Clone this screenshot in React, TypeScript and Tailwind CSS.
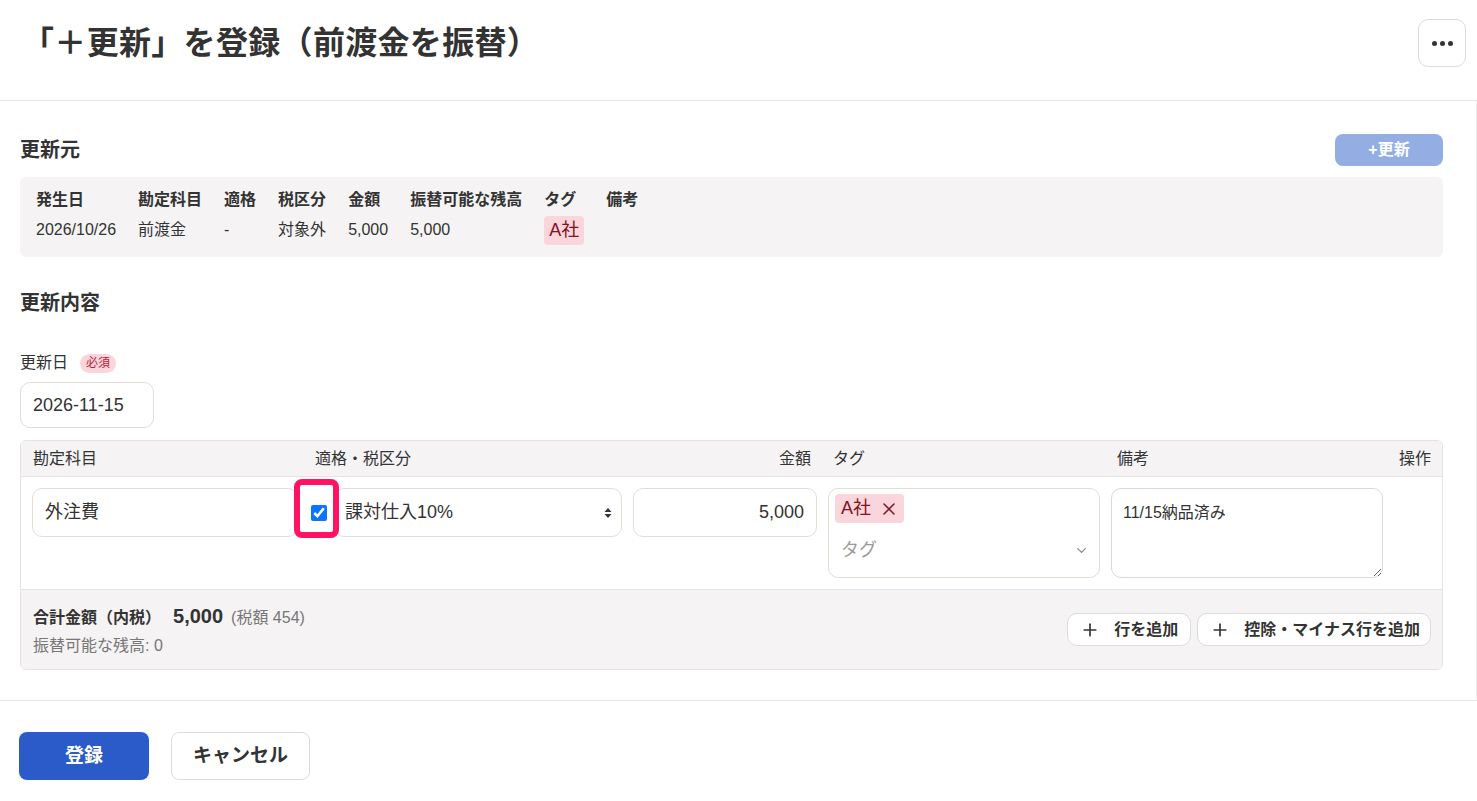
import React from "react";
import { ChevronDown, Plus, X } from "lucide-react";

const FONT = { fontFamily: '"Liberation Sans", "Noto Sans CJK JP", sans-serif' };

function SelectArrows() {
  return (
    <svg width="8" height="12" viewBox="0 0 8 12" className="shrink-0">
      <path d="M4 1 L7.5 5 L0.5 5 Z" fill="#333" />
      <path d="M4 11 L7.5 7 L0.5 7 Z" fill="#333" />
    </svg>
  );
}

export default function App() {
  return (
    <div className="min-h-screen bg-white text-[#333]" style={FONT}>
      {/* Header */}
      <header className="h-[101px] border-b border-[#e6e6e6] pl-5 pr-[11px] flex items-start justify-between pt-[19px]">
        <h1 className="text-[32px] font-bold leading-[48px] tracking-[0.01em] ml-[2px]">「＋更新」を登録（前渡金を振替）</h1>
        <button className="w-[48px] h-[48px] rounded-[10px] border border-[#dcdcdc] bg-white flex items-center justify-center gap-[3px]">
          <span className="w-[5px] h-[5px] rounded-full bg-[#333]" />
          <span className="w-[5px] h-[5px] rounded-full bg-[#333]" />
          <span className="w-[5px] h-[5px] rounded-full bg-[#333]" />
        </button>
      </header>

      <main className="pl-5 pr-[33px] pt-[33px] pb-[30px] border-r border-[#eeeeee]">
        {/* 更新元 */}
        <div className="flex items-center justify-between h-[32px]">
          <h2 className="text-[20px] font-bold leading-[28px]">更新元</h2>
          <button className="w-[108px] h-[32px] rounded-[8px] bg-[#94aee4] text-white text-[16px] font-bold">+更新</button>
        </div>
        <div className="mt-[11px] h-[80px] rounded-[6px] bg-[#f5f3f4] px-4 pt-3">
          <table className="border-collapse text-[16px]">
            <thead>
              <tr className="text-left">
                <th className="pr-[22px] font-bold leading-[22px] p-0">発生日</th>
                <th className="pr-[22px] font-bold leading-[22px]">勘定科目</th>
                <th className="pr-[22px] font-bold leading-[22px]">適格</th>
                <th className="pr-[22px] font-bold leading-[22px]">税区分</th>
                <th className="pr-[22px] font-bold leading-[22px]">金額</th>
                <th className="pr-[22px] font-bold leading-[22px]">振替可能な残高</th>
                <th className="pr-[22px] font-bold leading-[22px]">タグ</th>
                <th className="font-bold leading-[22px]">備考</th>
              </tr>
            </thead>
            <tbody>
              <tr className="align-top">
                <td className="pr-[22px] pt-[5px] leading-[27px]">2026/10/26</td>
                <td className="pr-[22px] pt-[5px] leading-[27px]">前渡金</td>
                <td className="pr-[22px] pt-[5px] leading-[27px]">-</td>
                <td className="pr-[22px] pt-[5px] leading-[27px]">対象外</td>
                <td className="pr-[22px] pt-[5px] leading-[27px]">5,000</td>
                <td className="pr-[22px] pt-[5px] leading-[27px]">5,000</td>
                <td className="pr-[22px] pt-[5px]">
                  <span className="flex w-fit h-[29px] items-center px-[5px] rounded-[4px] bg-[#fbd5dc] text-[#7d1426] text-[18px]">A社</span>
                </td>
                <td></td>
              </tr>
            </tbody>
          </table>
        </div>

        {/* 更新内容 */}
        <h2 className="mt-[32px] text-[20px] font-bold leading-[28px]">更新内容</h2>
        <div className="mt-[34px] flex items-center gap-[12px] h-[24px]">
          <span className="text-[16px] leading-[24px]">更新日</span>
          <span className="h-[19px] px-[6px] rounded-full bg-[#fbd5dc] text-[#b51f3a] text-[12px] leading-[19px]">必須</span>
        </div>
        <div className="mt-[7px] w-[134px] h-[46px] rounded-[10px] border border-[#e2ded6] flex items-center pl-[12px] text-[18px]">
          2026-11-15
        </div>

        {/* Lines table */}
        <div className="mt-[12px] rounded-[6px] border border-[#e3e3e3] overflow-hidden">
          <div className="bg-[#f5f3f4] h-[36px] border-b border-[#e3e3e3] px-[11px] grid grid-cols-[266px_313px_184px_272px_272px_1fr] gap-x-[11px] items-center text-[16px]">
            <div className="pl-[1px]">勘定科目</div>
            <div className="pl-[6px]">適格・税区分</div>
            <div className="pr-[6px] text-right">金額</div>
            <div className="pl-[5px]">タグ</div>
            <div className="pl-[6px]">備考</div>
            <div className="text-right">操作</div>
          </div>
          <div className="bg-white px-[11px] pt-[11px] pb-[11px] grid grid-cols-[266px_313px_184px_272px_272px_1fr] gap-x-[11px] items-start">
            <div className="h-[49px] rounded-[10px] border border-[#e2ded6] flex items-center pl-[12px] text-[18px]">外注費</div>
            <div className="relative h-[49px] flex items-center">
              <input type="checkbox" checked readOnly className="ml-[2px] w-[16px] h-[16px] accent-[#0a75ff] shrink-0" />
              <div className="ml-[7px] flex-1 h-[49px] rounded-[10px] border border-[#e2ded6] flex items-center justify-between pl-[10px] pr-[9px] text-[18px]">
                <span>課対仕入10%</span>
                <SelectArrows />
              </div>
              <div className="absolute left-[-15px] top-[-9px] w-[45px] h-[59px] rounded-[8px] border-[6px] border-[#ff1464] pointer-events-none" />
            </div>
            <div className="h-[49px] rounded-[10px] border border-[#e2ded6] flex items-center justify-end pr-[12px] text-[18px]">5,000</div>
            <div className="h-[90px] rounded-[10px] border border-[#e2ded6] pl-[6px] pt-[5px] pr-[10px] flex flex-col">
              <span className="self-start h-[29px] pl-[6px] pr-[5px] rounded-[4px] bg-[#fbd5dc] text-[#7d1426] text-[18px] flex items-center gap-[8px]">
                A社
                <X size={20} strokeWidth={1.8} />
              </span>
              <div className="mt-[14px] flex items-center justify-between pl-[6px]">
                <span className="text-[18px] text-[#9a9a9a]">タグ</span>
                <ChevronDown size={15} color="#888" strokeWidth={2} />
              </div>
            </div>
            <textarea
              readOnly
              defaultValue="11/15納品済み"
              className="h-[90px] rounded-[10px] border border-[#d9d9d9] px-[11px] pt-[12px] text-[16px] leading-[24px] outline-none"
              style={FONT}
            />
            <div />
          </div>
          <div className="bg-[#f5f3f4] border-t border-[#e3e3e3] h-[80px] px-[11px] flex items-center justify-between">
            <div className="pl-[1px]">
              <div className="flex items-baseline h-[24px]">
                <span className="text-[16px] font-bold">合計金額（内税）</span>
                <span className="ml-[12px] text-[20px] font-bold">5,000</span>
                <span className="ml-[8px] text-[16px] text-[#777]">(税額 454)</span>
              </div>
              <div className="mt-[9px] text-[16px] leading-[24px] text-[#777]">振替可能な残高: 0</div>
            </div>
            <div className="flex items-center gap-[6px]">
              <button className="h-[33px] rounded-[10px] border border-[#dcdcdc] bg-white pl-[12px] pr-[12px] flex items-center gap-[14px] text-[16px] font-bold">
                <Plus size={20} strokeWidth={2} />
                行を追加
              </button>
              <button className="h-[33px] rounded-[10px] border border-[#dcdcdc] bg-white pl-[12px] pr-[10px] flex items-center gap-[14px] text-[16px] font-bold">
                <Plus size={20} strokeWidth={2} />
                控除・マイナス行を追加
              </button>
            </div>
          </div>
        </div>
      </main>

      {/* Footer actions */}
      <footer className="border-t border-[#e6e6e6] pl-[19px] pt-[31px] flex items-center gap-[22px]">
        <button className="w-[130px] h-[48px] rounded-[8px] bg-[#2a5bc8] text-white text-[19px] font-bold">登録</button>
        <button className="w-[139px] h-[48px] rounded-[8px] border border-[#dcdcdc] bg-white text-[19px] font-bold">キャンセル</button>
      </footer>
    </div>
  );
}
